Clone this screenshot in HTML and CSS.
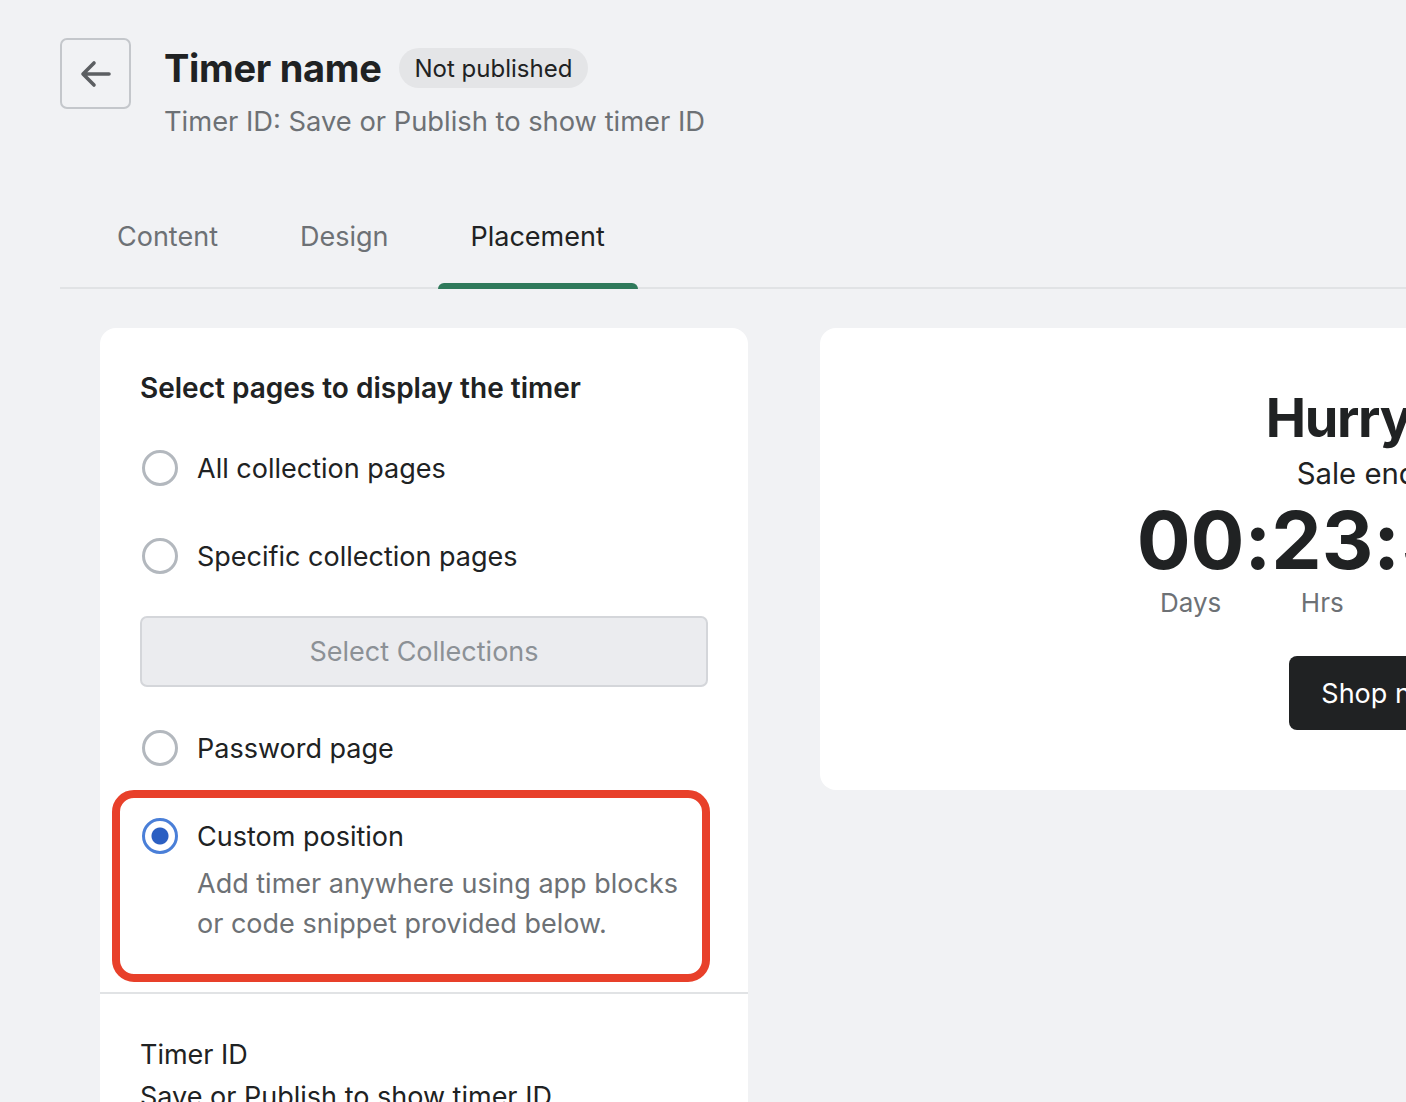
FILE: index.html
```html
<!DOCTYPE html>
<html lang="en">
<head>
    <meta charset="UTF-8">
    <meta name="viewport" content="width=device-width, initial-scale=1.0">
    <title>Timer name</title>
    <link rel="stylesheet" href="styles.css">
</head>
<body>
    <div class="page">
        <header class="page-header">
            <button class="back-btn" type="button" aria-label="Back">
                <svg width="36" height="36" viewBox="0 0 36 36" fill="none">
                    <path d="M31 18H6M16 7L5 18l11 11" stroke="#5c5f62" stroke-width="3.6" stroke-linecap="round" stroke-linejoin="round"/>
                </svg>
            </button>
            <div class="title-block">
                <div class="title-row">
                    <h1>Timer name</h1>
                    <span class="badge">Not published</span>
                </div>
                <p class="subtitle">Timer ID: Save or Publish to show timer ID</p>
            </div>
        </header>

        <nav class="tabs">
            <a class="tab">Content</a>
            <a class="tab">Design</a>
            <a class="tab active">Placement</a>
        </nav>

        <div class="layout">
            <div class="card settings">
                <div class="card-section">
                    <h2>Select pages to display the timer</h2>

                    <label class="option first">
                        <span class="radio"></span>
                        <span class="option-label">All collection pages</span>
                    </label>
                    <label class="option second">
                        <span class="radio"></span>
                        <span class="option-label">Specific collection pages</span>
                    </label>

                    <button type="button" class="select-btn" disabled>Select Collections</button>

                    <label class="option third">
                        <span class="radio"></span>
                        <span class="option-label">Password page</span>
                    </label>

                    <div class="highlight">
                        <label class="option">
                            <span class="radio checked"></span>
                            <span class="option-label">Custom position</span>
                        </label>
                        <p class="option-help">Add timer anywhere using app blocks or code snippet provided below.</p>
                    </div>
                </div>
                <div class="card-section timer-id">
                    <p>Timer ID</p>
                    <p>Save or Publish to show timer ID</p>
                </div>
            </div>

            <div class="card preview">
                <h3 class="preview-title">Hurry up!</h3>
                <p class="preview-sub">Sale ends in:</p>
                <div class="countdown">
                    <div class="unit"><span class="num">00</span><span class="unit-label">Days</span></div>
                    <span class="colon">:</span>
                    <div class="unit"><span class="num">23</span><span class="unit-label">Hrs</span></div>
                    <span class="colon">:</span>
                    <div class="unit"><span class="num">55</span><span class="unit-label">Mins</span></div>
                    <span class="colon">:</span>
                    <div class="unit"><span class="num">20</span><span class="unit-label">Secs</span></div>
                </div>
                <button type="button" class="shop-btn">Shop now</button>
            </div>
        </div>
    </div>
</body>
</html>
```

FILE: styles.css
```css
* {
    margin: 0;
    padding: 0;
    box-sizing: border-box;
}

body {
    font-family: Inter, "Noto Sans", sans-serif;
    background: #f1f2f4;
    color: #202223;
    overflow: hidden;
}

.page {
    padding: 38px 0 0 60px;
    width: 2200px;
}

.page-header {
    display: flex;
    align-items: flex-start;
    gap: 33px;
}

.back-btn {
    width: 71px;
    height: 71px;
    border: 2px solid #c4c7cb;
    border-radius: 7px;
    background: transparent;
    display: flex;
    align-items: center;
    justify-content: center;
}

.title-block {
    padding-top: 8px;
}

.title-row {
    display: flex;
    align-items: center;
    gap: 17px;
    height: 44px;
}

h1 {
    font-size: 38px;
    font-weight: 700;
    letter-spacing: -0.3px;
}

.badge {
    background: #e4e5e7;
    border-radius: 20px;
    height: 40px;
    padding: 0 16px;
    display: flex;
    align-items: center;
    font-size: 24px;
    color: #202223;
}

.subtitle {
    margin-top: 14px;
    font-size: 27.3px;
    line-height: 36px;
    color: #6d7175;
}

.tabs {
    margin-top: 47px;
    width: 1346px;
    border-bottom: 2px solid #e1e3e5;
    display: flex;
    gap: 16px;
    padding-left: 24px;
}

.tab {
    position: relative;
    padding: 0 33px;
    height: 100px;
    line-height: 100px;
    font-size: 27px;
    color: #6d7175;
}

.tab.active {
    color: #202223;
}

.tab.active::after {
    content: "";
    position: absolute;
    left: 0;
    right: 0;
    bottom: -2px;
    height: 6px;
    background: #2f7a5b;
    border-radius: 6px 6px 0 0;
}

.layout {
    display: flex;
    align-items: flex-start;
    gap: 72px;
    margin: 39px 0 0 40px;
}

.card {
    background: #fff;
    border-radius: 16px;
}

.settings {
    width: 648px;
    flex-shrink: 0;
}

.card-section {
    padding: 40px 40px 10px;
}

h2 {
    font-size: 28px;
    font-weight: 600;
    line-height: 40px;
}

.option {
    display: flex;
    align-items: center;
    gap: 19px;
    height: 40px;
    font-size: 27px;
}

.option.first {
    margin-top: 40px;
}

.option.second {
    margin-top: 48px;
}

.option.third {
    margin-top: 41px;
}

.radio {
    width: 36px;
    height: 36px;
    margin-left: 2px;
    border: 3px solid #b3b8be;
    border-radius: 50%;
    flex-shrink: 0;
}

.radio.checked {
    border: 3px solid #4a7fd8;
    background: radial-gradient(circle, #2b5fc2 0 8px, #fff 9px);
}

.select-btn {
    margin-top: 40px;
    width: 568px;
    height: 71px;
    background: #ebecef;
    border: 2px solid #d4d6da;
    border-radius: 7px;
    font-family: inherit;
    font-size: 27px;
    color: #8c9196;
}

.highlight {
    margin: 22px -2px 0 -28px;
    border: 8px solid #e8402a;
    border-radius: 22px;
    padding: 18px 20px 30px;
}

.option-help {
    margin-left: 57px;
    margin-top: 8px;
    font-size: 27px;
    line-height: 40px;
    color: #6d7175;
}

.timer-id {
    border-top: 2px solid #e1e3e5;
    padding-top: 41px;
}

.timer-id p {
    font-size: 27px;
    line-height: 40px;
    margin-bottom: 2px;
}

.preview {
    width: 1130px;
    height: 462px;
    padding-top: 58px;
    display: flex;
    flex-direction: column;
    align-items: center;
}

.preview-title {
    font-size: 54px;
    font-weight: 700;
    line-height: 64px;
    letter-spacing: -1.3px;
}

.preview-sub {
    font-size: 29.3px;
    line-height: 38px;
    margin-top: 5px;
}

.countdown {
    display: flex;
    align-items: flex-start;
    margin-top: 5px;
}

.unit {
    display: flex;
    flex-direction: column;
    align-items: center;
}

.num, .colon {
    font-size: 80px;
    font-weight: 700;
    line-height: 84px;
}

.unit-label {
    margin-top: 4px;
    font-size: 26px;
    line-height: 34px;
    color: #6d7175;
}

.shop-btn {
    margin-top: 36px;
    height: 74px;
    padding: 0 32px;
    background: #202223;
    color: #fff;
    border: none;
    border-radius: 8px;
    font-family: inherit;
    font-size: 27px;
}
```
